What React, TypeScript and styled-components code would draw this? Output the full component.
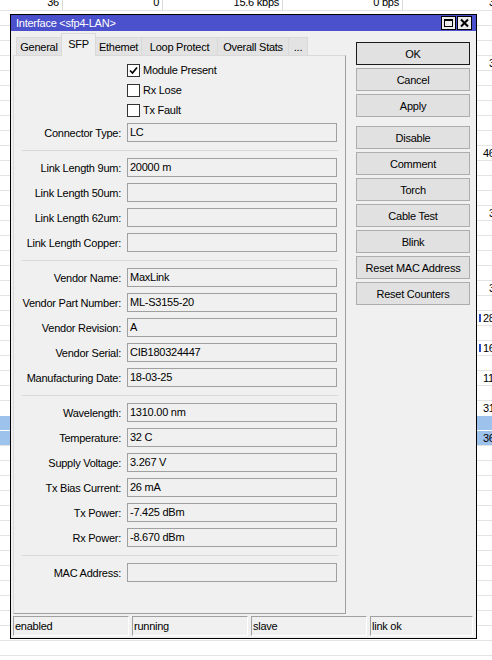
import React from "react";
import styled, { createGlobalStyle } from "styled-components";

const GlobalStyle = createGlobalStyle`
  html, body {
    margin: 0;
    padding: 0;
    background: #fff;
    overflow: hidden;
  }
  body {
    font-family: "Liberation Sans", Arial, sans-serif;
    font-size: 11px;
    letter-spacing: -0.25px;
    color: #000;
  }
`;

type ListItem = { value?: string; indent?: boolean; mark?: boolean; selected?: boolean };

const listRows: ListItem[] = Array.from({ length: 44 }, () => ({}));
listRows[3] = { value: "3", indent: true };
listRows[9] = { value: "46" };
listRows[13] = { value: "3", indent: true };
listRows[18] = { value: "3", indent: true };
listRows[20] = { value: "28", mark: true };
listRows[22] = { value: "16", mark: true };
listRows[24] = { value: "11" };
listRows[26] = { value: "31" };
listRows[27] = { selected: true };
listRows[28] = { value: "36", selected: true };

const tabs = [
  { name: "General", width: 46 },
  { name: "SFP", width: 35, active: true },
  { name: "Ethemet", width: 47 },
  { name: "Loop Protect", width: 77 },
  { name: "Overall Stats", width: 72 },
  { name: "...", width: 20 },
];

const checks = [
  { name: "Module Present", checked: true },
  { name: "Rx Lose", checked: false },
  { name: "Tx Fault", checked: false },
];

const fieldGroups: [string, string][][] = [
  [["Connector Type:", "LC"]],
  [
    ["Link Length 9um:", "20000 m"],
    ["Link Length 50um:", ""],
    ["Link Length 62um:", ""],
    ["Link Length Copper:", ""],
  ],
  [
    ["Vendor Name:", "MaxLink"],
    ["Vendor Part Number:", "ML-S3155-20"],
    ["Vendor Revision:", "A"],
    ["Vendor Serial:", "CIB180324447"],
    ["Manufacturing Date:", "18-03-25"],
  ],
  [
    ["Wavelength:", "1310.00 nm"],
    ["Temperature:", "32 C"],
    ["Supply Voltage:", "3.267 V"],
    ["Tx Bias Current:", "26 mA"],
    ["Tx Power:", "-7.425 dBm"],
    ["Rx Power:", "-8.670 dBm"],
  ],
  [["MAC Address:", ""]],
];

const actionGroups = [
  ["OK", "Cancel", "Apply"],
  ["Disable", "Comment", "Torch", "Cable Test", "Blink", "Reset MAC Address", "Reset Counters"],
];

const statuses = ["enabled", "running", "slave", "link ok"];

const App = () => {
  return (
    <Page>
      <GlobalStyle />
      <List>
        <TopRow>
          <TopCell>36</TopCell>
          <TopCell>0</TopCell>
          <TopCell>15.6 kbps</TopCell>
          <TopCell>0 bps</TopCell>
          <TailCell $indent>3</TailCell>
        </TopRow>
        {listRows.map((row, i) => (
          <ListRow key={i} $selected={row.selected}>
            <span />
            <TailCell $indent={row.indent}>
              {row.mark && <Mark />}
              {row.value}
            </TailCell>
          </ListRow>
        ))}
      </List>

      <Window>
        <TitleBar>
          <Title>Interface &lt;sfp4-LAN&gt;</Title>
          <TitleButtons>
            <TitleButton>
              <svg width="13" height="12" viewBox="0 0 13 12">
                <rect x="2.5" y="2.5" width="8" height="7" fill="none" stroke="#000" />
                <rect x="2" y="2" width="9" height="2" fill="#000" />
              </svg>
            </TitleButton>
            <TitleButton>
              <svg width="13" height="12" viewBox="0 0 13 12">
                <path d="M3 2.5 L10 9.5 M10 2.5 L3 9.5" stroke="#000" strokeWidth="2" />
              </svg>
            </TitleButton>
          </TitleButtons>
        </TitleBar>

        <Body>
          <TabArea>
            <TabStrip>
              {tabs.map((t) => (
                <Tab key={t.name} $width={t.width} $active={t.active}>
                  {t.name}
                </Tab>
              ))}
            </TabStrip>
            <Panel>
              {checks.map((c) => (
                <CheckRow key={c.name}>
                  <span />
                  <CheckItem>
                    <CheckBox>
                      {c.checked && (
                        <svg width="11" height="11" viewBox="0 0 11 11">
                          <path d="M2 5.5 L4.5 8 L9 2.5" fill="none" stroke="#000" strokeWidth="1.7" />
                        </svg>
                      )}
                    </CheckBox>
                    {c.name}
                  </CheckItem>
                </CheckRow>
              ))}
              {fieldGroups.map((group, gi) => (
                <React.Fragment key={gi}>
                  {gi > 0 && <Separator />}
                  <FieldGroup $first={gi === 0}>
                    {group.map(([label, value]) => (
                      <FieldRow key={label}>
                        <Label>{label}</Label>
                        <Field>{value}</Field>
                      </FieldRow>
                    ))}
                  </FieldGroup>
                </React.Fragment>
              ))}
            </Panel>
          </TabArea>

          <ButtonColumn>
            {actionGroups.map((group, gi) => (
              <ButtonGroup key={gi}>
                {group.map((b) => (
                  <Button key={b} $primary={b === "OK"}>
                    {b}
                  </Button>
                ))}
              </ButtonGroup>
            ))}
          </ButtonColumn>
        </Body>

        <StatusBar>
          {statuses.map((s) => (
            <StatusCell key={s}>{s}</StatusCell>
          ))}
        </StatusBar>
      </Window>
    </Page>
  );
};

export default App;

const Page = styled.div`
  position: relative;
  width: 492px;
  height: 660px;
  overflow: hidden;
  background: #fff;
`;

const List = styled.div`
  display: flex;
  flex-direction: column;
  margin-top: -6px;
`;

const TopRow = styled.div`
  display: grid;
  grid-template-columns: 63px 100px 120px 120px 1fr;
  height: 16px;
  line-height: 14px;
  align-items: center;
`;

const TopCell = styled.div`
  height: 100%;
  box-sizing: border-box;
  text-align: right;
  padding-right: 3px;
  border-right: 1px solid #d9d9d9;
  line-height: 16px;
`;

const ListRow = styled.div<{ $selected?: boolean }>`
  display: grid;
  grid-template-columns: 403px 1fr;
  align-items: center;
  height: 15px;
  box-sizing: border-box;
  border-top: 1px solid ${(p) => (p.$selected ? "#ffffff" : "#e3e3e3")};
  background: ${(p) => (p.$selected ? "#9dc2ec" : "transparent")};
  line-height: 14px;
`;

const TailCell = styled.div<{ $indent?: boolean }>`
  padding-left: ${(p) => (p.$indent ? 86 : 80)}px;
  white-space: nowrap;
  display: flex;
  align-items: center;
`;

const Mark = styled.span`
  display: inline-block;
  width: 2px;
  height: 8px;
  margin-left: -4px;
  margin-right: 2px;
  background: #2a4fc4;
`;

const Window = styled.div`
  position: absolute;
  left: 10px;
  top: 14px;
  width: 467px;
  height: 625px;
  box-sizing: border-box;
  border: 1px solid #000;
  background: #f0f0f0;
  display: flex;
  flex-direction: column;
`;

const TitleBar = styled.div`
  height: 16px;
  flex: none;
  background: #4b50cc;
  display: flex;
  align-items: center;
  justify-content: space-between;
  padding: 0 4px 0 5px;
`;

const Title = styled.div`
  color: #fff;
  font-size: 11px;
  white-space: nowrap;
`;

const TitleButtons = styled.div`
  display: flex;
  gap: 1px;
`;

const TitleButton = styled.div`
  width: 15px;
  height: 14px;
  box-sizing: border-box;
  border: 1px solid #000;
  background: #ececec;
  display: flex;
  align-items: center;
  justify-content: center;
`;

const Body = styled.div`
  flex: 1;
  min-height: 0;
  display: flex;
  padding-top: 2px;
`;

const TabArea = styled.div`
  margin-left: 2px;
  width: 333px;
  display: flex;
  flex-direction: column;
`;

const TabStrip = styled.div`
  display: flex;
  align-items: flex-end;
  height: 22px;
  flex: none;
  padding-left: 3px;
`;

const Tab = styled.div<{ $width: number; $active?: boolean }>`
  position: relative;
  z-index: ${(p) => (p.$active ? 1 : 0)};
  width: ${(p) => p.$width}px;
  height: ${(p) => (p.$active ? 23 : 18)}px;
  margin-bottom: ${(p) => (p.$active ? -1 : 0)}px;
  margin-right: -1px;
  box-sizing: border-box;
  border: 1px solid #d9d9d9;
  border-bottom: none;
  background: ${(p) => (p.$active ? "#f0f0f0" : "#e3e3e3")};
  display: flex;
  align-items: center;
  justify-content: center;
  padding-bottom: ${(p) => (p.$active ? 2 : 0)}px;
  white-space: nowrap;
`;

const Panel = styled.div`
  flex: 1;
  display: flex;
  flex-direction: column;
  padding-top: 4px;
  border: 1px solid;
  border-color: #d9d9d9 #a0a0a0 #a0a0a0 #d9d9d9;
  background: #f0f0f0;
`;

const CheckRow = styled.div`
  display: grid;
  grid-template-columns: 107px 1fr;
  column-gap: 6px;
  height: 20px;
  align-items: center;
`;

const CheckItem = styled.div`
  display: flex;
  align-items: center;
  gap: 3px;
`;

const CheckBox = styled.div`
  width: 13px;
  height: 13px;
  box-sizing: border-box;
  border: 1px solid #333;
  background: #fff;
  display: flex;
  align-items: center;
  justify-content: center;
`;

const FieldGroup = styled.div<{ $first?: boolean }>`
  display: flex;
  flex-direction: column;
  gap: 6px;
  margin-top: ${(p) => (p.$first ? 3 : 0)}px;
`;

const FieldRow = styled.div`
  display: grid;
  grid-template-columns: 107px 210px;
  column-gap: 6px;
  height: 19px;
  align-items: center;
`;

const Label = styled.div`
  text-align: right;
  white-space: nowrap;
`;

const Field = styled.div`
  height: 19px;
  box-sizing: border-box;
  border: 1px solid #a0a0a0;
  background: #f0f0f0;
  padding: 0 2px;
  line-height: 17px;
  white-space: nowrap;
`;

const Separator = styled.div`
  height: 1px;
  background: #d8d8d8;
  margin: 8px 7px 7px 8px;
`;

const ButtonColumn = styled.div`
  display: flex;
  flex-direction: column;
  gap: 9px;
  margin: 9px 0 0 10px;
`;

const ButtonGroup = styled.div`
  display: flex;
  flex-direction: column;
  gap: 3px;
`;

const Button = styled.div<{ $primary?: boolean }>`
  width: 114px;
  height: 23px;
  box-sizing: border-box;
  border: 1px solid ${(p) => (p.$primary ? "#1a1a1a" : "#adadad")};
  background: #e1e1e1;
  display: flex;
  align-items: center;
  justify-content: center;
  white-space: nowrap;
`;

const StatusBar = styled.div`
  display: grid;
  grid-template-columns: 116px 116px 116px 1fr;
  gap: 3px;
  height: 24px;
  flex: none;
  box-sizing: border-box;
  padding: 2px 3px 2px 2px;
`;

const StatusCell = styled.div`
  box-sizing: border-box;
  border: 1px solid;
  border-color: #a0a0a0 #ffffff #ffffff #a0a0a0;
  padding-left: 1px;
  line-height: 18px;
`;
